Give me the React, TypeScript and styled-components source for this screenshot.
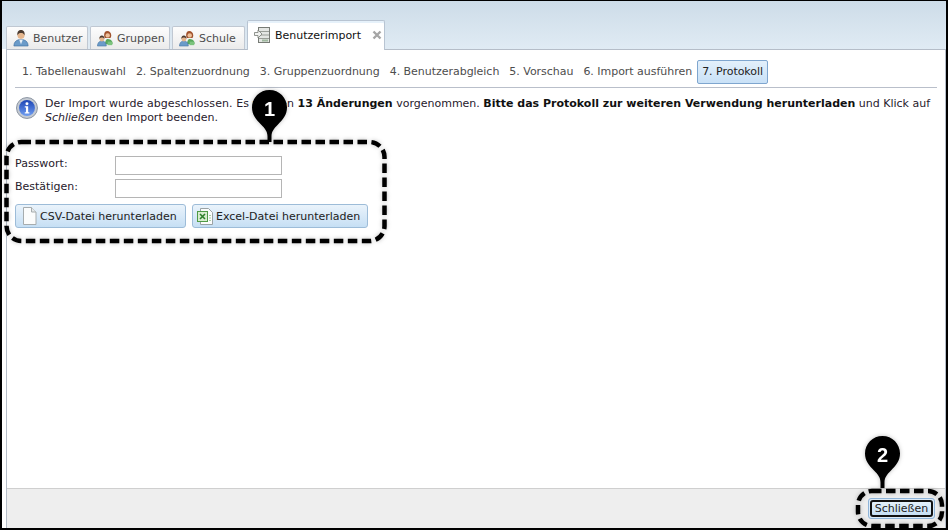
import React from 'react';
import styled, { createGlobalStyle } from 'styled-components';

const GlobalStyle = createGlobalStyle`
    html, body {
        margin: 0;
        padding: 0;
        background: #fff;
    }
    #root {
        width: 948px;
        height: 530px;
    }
`;

const PersonIcon = () => (
    <svg width="16" height="18" viewBox="0 0 18 20">
        <path d="M1 19c0-4 2-6 5-7h6c3 1 5 3 5 7z" fill="#6b9bc9" stroke="#3f6f9f" strokeWidth="0.7" />
        <path d="M7 12l2 5 2-5z" fill="#e8f0f6" />
        <circle cx="9" cy="7" r="4" fill="#e5b68e" />
        <path d="M5 7c-.6-4 1.500-6 4-6s4.600 2 4 6c-1-2-2-2.500-4-2.500S6 5 5 7z" fill="#4a3a30" />
    </svg>
);

const GroupIcon = () => (
    <svg width="16" height="17" viewBox="0 0 18 19">
        <path d="M11.500 1C9 1 8 3 8 5.500c0 2 .5 3 1 3.500h6c.8-1 1-2 1-3.500C16 3 14 1 11.500 1z" fill="#a0522d" />
        <circle cx="12" cy="6" r="2.500" fill="#eec09a" />
        <path d="M9 16c0-3 1-6 3-6s5 1 5.500 4v2z" fill="#58a85c" />
        <rect x="12" y="13" width="5" height="4" fill="#7cc47e" />
        <path d="M0.500 18c0-3 1.500-5 3.500-5.500h3c2 .5 3.500 2.500 3.500 5.500z" fill="#6b9bc9" stroke="#3f6f9f" strokeWidth="0.6" />
        <circle cx="5.500" cy="10" r="2.800" fill="#e5b68e" />
        <path d="M2.700 10c-.3-2.700 1-4 2.800-4s3.100 1.300 2.800 4c-.7-1.200-1.600-1.500-2.800-1.500s-2.100.3-2.800 1.500z" fill="#4a3a30" />
    </svg>
);

const ImportIcon = () => (
    <svg width="16" height="18" viewBox="0 0 16 18">
        <rect x="4.500" y="1.500" width="11" height="15" fill="#e4e6e3" stroke="#777b75" />
        <path d="M5 5.500h10M5 9h10M5 12.500h10" stroke="#9a9e98" />
        <rect x="8" y="13.500" width="6" height="2" fill="#9fb89f" />
        <path d="M.5 6.500h3.500V4l4 4-4 4V9.500H.5z" fill="#f2f3f1" stroke="#777b75" strokeWidth="0.8" />
    </svg>
);

const CloseIcon = () => (
    <svg width="10" height="10" viewBox="0 0 10 10">
        <path d="M1.500 1.500l7 7M8.500 1.500l-7 7" stroke="#a6a6a6" strokeWidth="2.400" />
    </svg>
);

const InfoIcon = () => (
    <svg width="22" height="22" viewBox="0 0 22 22">
        <defs>
            <linearGradient id="infoFill" x1="0" y1="0" x2="0" y2="1">
                <stop offset="0" stopColor="#1c45b5" />
                <stop offset="1" stopColor="#6f9df0" />
            </linearGradient>
        </defs>
        <circle cx="11" cy="11" r="10.500" fill="#c4cad2" stroke="#8d96a3" strokeWidth="1" />
        <circle cx="11" cy="11" r="8" fill="url(#infoFill)" />
        <circle cx="11" cy="6.800" r="1.500" fill="#fff" />
        <path d="M8.800 9.300h3.400v6h1.200v1.200H8.800v-1.200H10V10.500H8.800z" fill="#fff" />
    </svg>
);

const FileIcon = () => (
    <svg width="17" height="18" viewBox="-3 0 17 18">
        <path d="M.5.5h8l4.500 4.500v12.500H.5z" fill="#fbfcfc" stroke="#a6acae" />
        <path d="M8.500.5v4.500H13" fill="#e6e9ea" stroke="#a6acae" />
    </svg>
);

const ExcelIcon = () => (
    <svg width="16" height="17" viewBox="0 0 16 17">
        <path d="M3.500.5h8l4 4v12h-12z" fill="#fbfcfc" stroke="#9aa2a4" />
        <rect x="0.500" y="3.500" width="10" height="10" fill="#d8eccf" stroke="#4f9a45" />
        <path d="M3 6l5 5M8 6l-5 5" stroke="#2f7f2c" strokeWidth="1.600" />
        <path d="M12 7.500h2M12 10h2M12 12.500h2" stroke="#a8cfa2" />
    </svg>
);

const PinShape = () => (
    <svg width="35" height="52" viewBox="0 0 35 52">
        <path
            d="M17.500 0C27.200 0 35 7.800 35 17.500c0 7-4 12-9 17-4 4-6.500 7-6.500 12V52h-4v-5.500c0-5-2.500-8-6.500-12-5-5-9-10-9-17C0 7.800 7.800 0 17.500 0z"
            fill="#000"
        />
    </svg>
);

const tabs = [
    { label: 'Benutzer', icon: <PersonIcon />, width: 82 },
    { label: 'Gruppen', icon: <GroupIcon />, width: 80 },
    { label: 'Schule', icon: <GroupIcon />, width: 73 },
];

const steps = [
    '1. Tabellenauswahl',
    '2. Spaltenzuordnung',
    '3. Gruppenzuordnung',
    '4. Benutzerabgleich',
    '5. Vorschau',
    '6. Import ausführen',
];

const App: React.FC = () => {
    return (
        <Frame>
            <GlobalStyle />
            <TabBar>
                {tabs.map((tab) => (
                    <Tab key={tab.label} $width={tab.width}>
                        {tab.icon}
                        <span>{tab.label}</span>
                    </Tab>
                ))}
                <ActiveTab $width={138}>
                    <ImportIcon />
                    <span>Benutzerimport</span>
                    <CloseMark>
                        <CloseIcon />
                    </CloseMark>
                </ActiveTab>
            </TabBar>

            <Panel>
                <Content>
                    <Steps>
                        {steps.map((step) => (
                            <Step key={step}>{step}</Step>
                        ))}
                        <Step $active>7. Protokoll</Step>
                    </Steps>

                    <Message>
                        <InfoIcon />
                        <MessageText>
                            <Lead>Der Import wurde abgeschlossen. Es wurden </Lead>
                            <b>13 Änderungen</b> vorgenommen.{' '}
                            <b>Bitte das Protokoll zur weiteren Verwendung herunterladen</b> und Klick auf{' '}
                            <i>Schließen</i> den Import beenden.
                        </MessageText>
                    </Message>

                    <Form>
                        <Field>
                            <FieldLabel>Passwort:</FieldLabel>
                            <TextInput type="password" />
                        </Field>
                        <Field>
                            <FieldLabel>Bestätigen:</FieldLabel>
                            <TextInput type="password" />
                        </Field>
                        <Actions>
                            <Button $width={171}>
                                <FileIcon />
                                CSV-Datei herunterladen
                            </Button>
                            <Button $width={176}>
                                <ExcelIcon />
                                Excel-Datei herunterladen
                            </Button>
                        </Actions>
                    </Form>
                </Content>

                <Footer>
                    <CloseButton>
                        <CloseFocus>Schließen</CloseFocus>
                    </CloseButton>
                </Footer>
            </Panel>

            <Callout $left={0} $top={138} width="386" height="106">
                <rect x="4.500" y="3" width="378" height="99" rx="15" />
            </Callout>
            <Callout $left={852} $top={487} width="92" height="40">
                <rect x="4" y="3" width="84" height="35" rx="14" />
            </Callout>

            <Pin $left={250} $top={89}>
                <PinShape />
                <PinNumber>1</PinNumber>
            </Pin>
            <Pin $left={863} $top={435}>
                <PinShape />
                <PinNumber>2</PinNumber>
            </Pin>
        </Frame>
    );
};

const Frame = styled.div`
    position: relative;
    box-sizing: border-box;
    width: 948px;
    height: 530px;
    overflow: hidden;
    display: flex;
    flex-direction: column;
    border-style: solid;
    border-color: #000;
    border-width: 1px 2px 2px 2px;
    background: #fff;
    font-family: 'DejaVu Sans', Verdana, sans-serif;
    font-size: 11px;
    color: #111;
`;

const TabBar = styled.div`
    height: 48px;
    flex: none;
    box-sizing: border-box;
    display: flex;
    align-items: flex-end;
    gap: 2px;
    padding-left: 4px;
    background: linear-gradient(#cddce8, #e0ebf4);
`;

const Tab = styled.div<{ $width: number }>`
    box-sizing: border-box;
    width: ${(props) => props.$width}px;
    height: 23px;
    display: flex;
    align-items: center;
    gap: 4px;
    padding: 0 0 0 6px;
    border: 1px solid #c0c8d2;
    border-bottom: none;
    border-radius: 2px 2px 0 0;
    background: linear-gradient(#fdfdfd, #ebebeb);
    color: #4d4d4d;
`;

const ActiveTab = styled(Tab)`
    position: relative;
    z-index: 1;
    height: 30px;
    margin-bottom: -1px;
    padding: 0 0 1px 6px;
    gap: 5px;
    background: #fff;
    border-color: #b8c4d2;
    color: #111;
    box-shadow: inset 0 2px 0 #e6f1fa;
`;

const CloseMark = styled.span`
    display: flex;
    margin-left: 6px;
`;

const Panel = styled.div`
    flex: 1;
    min-height: 0;
    display: flex;
    flex-direction: column;
    margin-left: 4px;
    border: 1px solid #b5bdc8;
    border-bottom: none;
    background: #fff;
`;

const Content = styled.div`
    flex: 1;
    padding: 0 8px;
`;

const Steps = styled.div`
    height: 38px;
    box-sizing: border-box;
    display: flex;
    align-items: center;
    padding: 7px 0 0 2px;
    border-bottom: 1px solid #b9bfca;
    color: #4d4d4d;
    letter-spacing: -0.03px;
`;

const Step = styled.div<{ $active?: boolean }>`
    box-sizing: border-box;
    height: 24px;
    line-height: 22px;
    padding: 0 4px;
    border: 1px solid ${(props) => (props.$active ? '#7fa6cf' : 'transparent')};
    border-radius: 2px;
    background: ${(props) => (props.$active ? 'linear-gradient(#e3f0fb, #c9e1f7)' : 'none')};
    color: ${(props) => (props.$active ? '#222' : '#4d4d4d')};
`;

const Message = styled.div`
    display: flex;
    gap: 7px;
    padding: 9px 0 0 1px;
`;

const MessageText = styled.div`
    line-height: 14px;
    width: 895px;
    color: #27202c;

    b {
        color: #111;
    }
`;

const Lead = styled.span`
    letter-spacing: 0.07px;
`;

const Form = styled.div`
    margin-top: 30px;
    display: flex;
    flex-direction: column;
    gap: 3px;
`;

const Field = styled.div`
    display: flex;
    align-items: center;
    height: 20px;
`;

const FieldLabel = styled.label`
    width: 100px;
    padding-bottom: 4px;
    color: #27202c;
`;

const TextInput = styled.input`
    box-sizing: border-box;
    width: 167px;
    height: 19px;
    margin: 0;
    padding: 0 3px;
    border: 1px solid #b5b5b5;
    background: #fff;
    outline: none;
`;

const Actions = styled.div`
    display: flex;
    gap: 6px;
    margin-top: 3px;
`;

const Button = styled.button<{ $width: number }>`
    box-sizing: border-box;
    width: ${(props) => props.$width}px;
    height: 24px;
    display: flex;
    align-items: center;
    gap: 3px;
    padding: 0 4px;
    border: 1px solid #9dbcd8;
    border-radius: 3px;
    background: linear-gradient(#eaf3fb, #c6dff4);
    font: inherit;
    color: #222;
    white-space: nowrap;
`;

const Footer = styled.div`
    flex: none;
    height: 40px;
    box-sizing: border-box;
    display: flex;
    justify-content: flex-end;
    align-items: center;
    padding-right: 10px;
    border-top: 1px solid #cfcfcf;
    background: #eeeeee;
`;

const CloseButton = styled.button`
    box-sizing: border-box;
    width: 67px;
    height: 21px;
    padding: 1px;
    display: flex;
    border: 1px solid #8fb4d8;
    border-radius: 3px;
    background: #dcebf9;
    font: inherit;
    color: #222;
`;

const CloseFocus = styled.span`
    box-sizing: border-box;
    flex: 1;
    border: 2px solid #111;
    border-radius: 3px;
    background: linear-gradient(#e3f0fb, #c6dff4);
    line-height: 13px;
    text-align: center;
`;

const Callout = styled.svg<{ $left: number; $top: number }>`
    position: absolute;
    left: ${(props) => props.$left}px;
    top: ${(props) => props.$top}px;
    overflow: visible;
    filter: drop-shadow(0 0 2px rgba(0, 0, 0, 0.25));

    rect {
        fill: none;
        stroke: #000;
        stroke-width: 4.5;
        stroke-dasharray: 9.5 4.5;
    }
`;

const Pin = styled.div<{ $left: number; $top: number }>`
    position: absolute;
    left: ${(props) => props.$left}px;
    top: ${(props) => props.$top}px;
    width: 35px;
    height: 52px;
    filter: drop-shadow(0 0 2px rgba(0, 0, 0, 0.25));

    svg {
        display: block;
    }
`;

const PinNumber = styled.span`
    position: absolute;
    left: 0;
    top: 7px;
    width: 35px;
    text-align: center;
    font-family: 'Liberation Sans', Arial, sans-serif;
    font-size: 20px;
    font-weight: bold;
    line-height: 24px;
    color: #fff;
`;

export default App;
